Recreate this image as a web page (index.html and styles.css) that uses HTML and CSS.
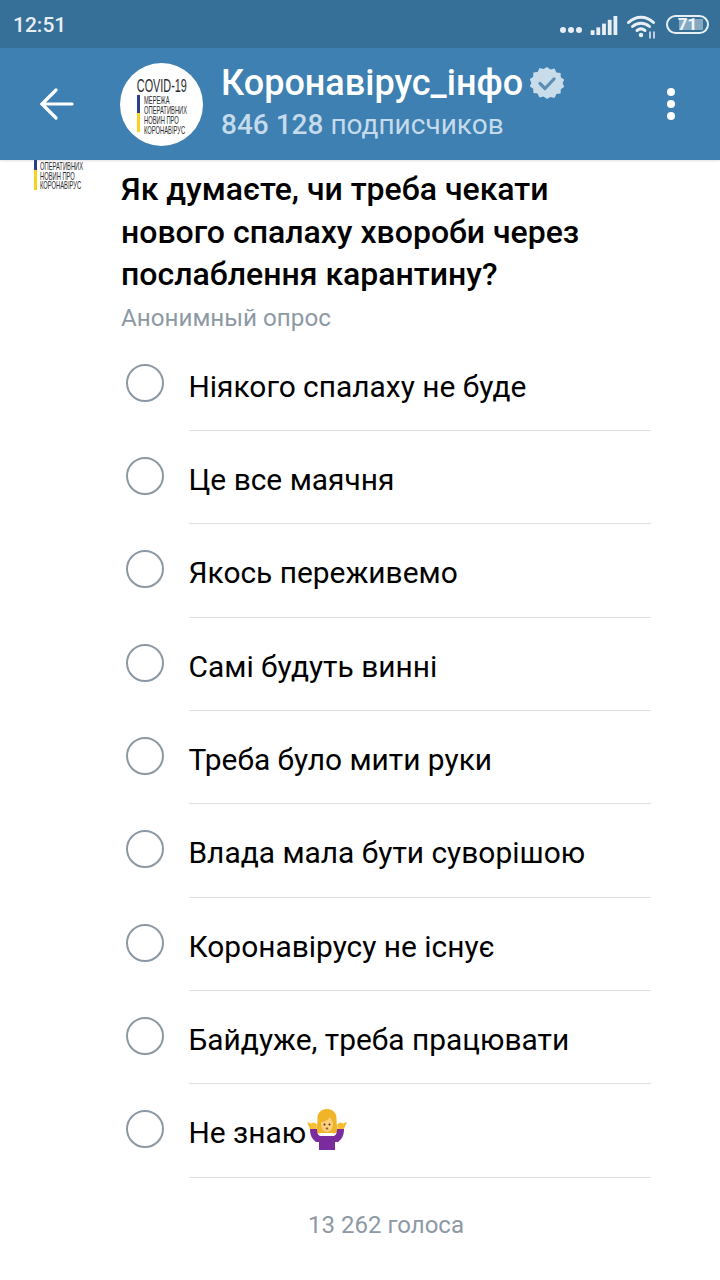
FILE: index.html
```html
<!DOCTYPE html>
<html lang="uk">
<head>
<meta charset="utf-8">
<title>Коронавірус_інфо</title>
<link rel="stylesheet" href="styles.css">
</head>
<body>
<div class="status">
  <span class="time">12:51</span>
  <div class="status-icons">
    <svg class="dots" width="24" height="8" viewBox="0 0 24 8"><circle cx="4" cy="4" r="3" fill="#e8f0f6"/><circle cx="12" cy="4" r="3" fill="#e8f0f6"/><circle cx="20" cy="4" r="3" fill="#e8f0f6"/></svg>
    <svg class="signal" width="28" height="20" viewBox="0 0 28 20" fill="#e8f0f6"><rect x="0" y="15" width="4" height="5"/><rect x="6" y="12" width="4" height="8"/><rect x="12" y="8" width="4" height="12"/><rect x="18" y="4" width="4" height="16"/><rect x="24" y="0" width="4" height="20"/></svg>
    <svg class="wifi" width="30" height="24" viewBox="0 0 30 24" fill="none" stroke="#e8f0f6" stroke-width="3" stroke-linecap="round"><path d="M1.500 7.500C9 .5 19 .5 26.500 7.500"/><path d="M5.500 11.500C10.500 7 17.500 7 22.500 11.500"/><path d="M10 15.500C12.500 13.500 15.500 13.500 18 15.500"/><circle cx="14" cy="20" r="2.200" fill="#e8f0f6" stroke="none"/><path d="M23 23v-6M27 23v-6" stroke-width="1.500"/></svg>
    <div class="battery"><span class="battery-fill"></span><span class="battery-num">71</span></div>
  </div>
</div>
<header class="bar">
  <svg class="back" width="34" height="32" viewBox="0 0 34 32" fill="none" stroke="#fff" stroke-width="3.200" stroke-linecap="round" stroke-linejoin="round"><path d="M2 16h30"/><path d="M16 2 2 16l14 14"/></svg>
  <div class="avatar">
    <div class="covid">COVID-19</div>
    <div class="logo-body">
      <div class="flag"><span class="flag-b"></span><span class="flag-y"></span></div>
      <div class="logo-lines"><span>МЕРЕЖА</span><span>ОПЕРАТИВНИХ</span><span>НОВИН ПРО</span><span>КОРОНАВІРУС</span></div>
    </div>
  </div>
  <div class="titles">
    <div class="title-row">
      <span class="title">Коронавірус_інфо</span>
      <svg class="verified" width="34" height="34" viewBox="0 0 34 34"><path fill="#c9dcea" d="M17 1l3.400 2.600 4.100-1 1.900 3.800 4.200.5.200 4.300 3.500 2.400L32.600 17l1.700 3.900-3.500 2.400-.2 4.300-4.200.5-1.900 3.800-4.100-1L17 33l-3.400-2.600-4.100 1-1.900-3.800-4.200-.5-.2-4.300-3.500-2.400L1.400 17-.3 13.100l3.500-2.400.2-4.300 4.200-.5 1.900-3.800 4.100 1z"/><path d="M10 17.500l5 5 9-9.500" fill="none" stroke="#5b8fb5" stroke-width="3.200" stroke-linecap="round" stroke-linejoin="round"/></svg>
    </div>
    <div class="subs"><b>846 128</b> подписчиков</div>
  </div>
  <div class="menu"><i></i><i></i><i></i></div>
</header>
<main class="content">
  <div class="side-logo">
    <div class="flag-small"><span class="flag-b"></span><span class="flag-y"></span></div>
    <div class="logo-lines small"><span>ОПЕРАТИВНИХ</span><span>НОВИН ПРО</span><span>КОРОНАВІРУС</span></div>
  </div>
  <div class="poll">
    <h1 class="question">Як думаєте, чи треба чекати нового спалаху хвороби через послаблення карантину?</h1>
    <div class="kind">Анонимный опрос</div>
    <ul class="options">
      <li class="option"><span class="radio"></span><span class="label">Ніякого спалаху не буде</span></li>
      <li class="option"><span class="radio"></span><span class="label">Це все маячня</span></li>
      <li class="option"><span class="radio"></span><span class="label">Якось переживемо</span></li>
      <li class="option"><span class="radio"></span><span class="label">Самі будуть винні</span></li>
      <li class="option"><span class="radio"></span><span class="label">Треба було мити руки</span></li>
      <li class="option"><span class="radio"></span><span class="label">Влада мала бути суворішою</span></li>
      <li class="option"><span class="radio"></span><span class="label">Коронавірусу не існує</span></li>
      <li class="option"><span class="radio"></span><span class="label">Байдуже, треба працювати</span></li>
      <li class="option"><span class="radio"></span><span class="label">Не знаю<svg class="shrug" width="42" height="41" viewBox="0 -3 42 41"><path fill="#f0b429" d="M21-3c-6 0-9.500 4-9.500 9 0 6-.5 10-2 13 2 2 4 3 5.500 2h12c1.500 1 3.500 0 5.500-2-1.500-3-2-7-2-13 0-5-3.500-9-9.500-9z"/><path fill="#7a2c9e" d="M4 17h7c0 4 1 6 3 7h14c2-1 3-3 3-7h7c0 6-2 10-6 13h-3v8H13v-8h-3c-4-3-6-7-6-13z"/><ellipse cx="21" cy="12" rx="6" ry="8" fill="#fcd07e"/><path fill="#f0b429" d="M14.500 10c4 0 7.500-1.500 9.500-5 1 2.500 2 4.500 3.500 5l-1-7h-11z"/><circle cx="18.500" cy="12.500" r="1" fill="#4a3020"/><circle cx="23.500" cy="12.500" r="1" fill="#4a3020"/><ellipse cx="21" cy="16.500" rx="1.300" ry="1" fill="#a0522d"/><path fill="#f6bd2e" d="M1 10l4 1.500 3-1 3 2-1 4.500H4zM41 10l-4 1.500-3-1-3 2 1 4.500h6z"/></svg></span></li>
    </ul>
    <div class="votes">13 262 голоса</div>
  </div>
</main>
</body>
</html>
```
FILE: styles.css
```css
* { box-sizing: border-box; }
html, body { margin: 0; padding: 0; }
body {
  width: 720px;
  height: 1280px;
  overflow: hidden;
  background: #fff;
  font-family: Roboto, "Noto Sans", sans-serif;
  color: #000;
}
.status {
  height: 48px;
  background: #366f97;
  display: flex;
  align-items: center;
  justify-content: space-between;
  padding: 0 11px 0 13px;
}
.time { color: #e6eef4; font-size: 21px; font-weight: 500; margin-top: 2px; }
.status-icons { display: flex; align-items: center; }
.dots { margin-top: 12px; margin-right: 7px; }
.signal { margin-top: 3px; margin-right: 9px; height: 19px; }
.wifi { margin-top: 5px; margin-right: 9px; }
.battery {
  position: relative;
  width: 43px;
  height: 19px;
  border: 2px solid #e8f0f6;
  border-radius: 10px;
  display: flex;
  align-items: center;
  justify-content: center;
}
.battery-fill {
  position: absolute;
  left: 11px;
  top: 2px;
  bottom: 2px;
  width: 24px;
  background: #86a9c2;
}
.battery-num { position: relative; color: #f0f5f9; font-size: 17px; font-weight: 700; line-height: 1; }
.bar {
  height: 112px;
  background: #3d80b1;
  display: flex;
  align-items: center;
  padding-left: 40px;
  box-shadow: 0 1px 2px rgba(0,0,0,.12);
  position: relative;
}
.back { flex: none; margin-right: 46px; }
.avatar {
  flex: none;
  width: 83px;
  height: 83px;
  border-radius: 50%;
  background: #fff;
  display: flex;
  flex-direction: column;
  align-items: center;
  padding-top: 14px;
  color: #2a2a2e;
}
.covid {
  font-family: "Liberation Sans", sans-serif;
  font-size: 19px;
  line-height: 17px;
  white-space: nowrap;
  transform: scaleX(.57);
}
.logo-body { display: flex; gap: 4px; width: 50px; margin-top: 1px; }
.flag { width: 3px; height: 37px; display: flex; flex-direction: column; flex: none; }
.flag-b { flex: 1; background: #2c3f8f; }
.flag-y { flex: 1; background: #f7d21f; }
.logo-lines {
  display: flex;
  flex-direction: column;
  font-family: "Liberation Sans", sans-serif;
  font-size: 10.500px;
  line-height: 10px;
  white-space: nowrap;
  transform: scaleX(.55);
  transform-origin: left top;
}
.titles { margin-left: 18px; margin-top: -3px; display: flex; flex-direction: column; }
.title-row { display: flex; align-items: center; height: 42px; margin-bottom: 3px; }
.title { color: #fff; font-size: 36px; font-weight: 500; line-height: 42px; }
.verified { margin-left: 7px; flex: none; }
.subs { color: #c5dbec; font-size: 28px; line-height: 36px; }
.subs b { font-weight: 500; }
.menu {
  position: absolute;
  left: 667px;
  top: 40px;
  display: flex;
  flex-direction: column;
  gap: 4px;
}
.menu i { width: 8px; height: 8px; border-radius: 50%; background: #fff; display: block; }
.content { position: relative; height: 1120px; }
.side-logo {
  position: absolute;
  left: 34px;
  top: 0;
  display: flex;
  gap: 3px;
  color: #2a2a2e;
}
.flag-small { width: 3px; height: 30px; display: flex; flex-direction: column; }
.flag-small .flag-b { flex: 1; }
.flag-small .flag-y { flex: 2; }
.logo-lines.small { padding-top: 2px; line-height: 9.500px; }
.poll { padding-left: 121px; width: 651px; }
.question {
  margin: 0;
  padding-top: 8px;
  font-size: 32px;
  font-weight: 500;
  line-height: 42.600px;
}
.kind { color: #8d99a5; font-size: 24.200px; line-height: 30px; margin-top: 7px; }
.options { list-style: none; margin: 5px 0 0; padding: 0; }
.option {
  height: 93.330px;
  display: flex;
  position: relative;
  padding-left: 67.500px;
}
.radio {
  position: absolute;
  left: 5px;
  top: 26px;
  width: 38px;
  height: 38px;
  border: 2.500px solid #8c98a3;
  border-radius: 50%;
}
.label {
  flex: 1;
  border-bottom: 1px solid #e0e0e0;
  font-size: 29.900px;
  line-height: 36px;
  padding-top: 31px;
  display: flex;
  align-items: flex-start;
}
.shrug { margin-top: -6px; flex: none; }
.votes {
  text-align: center;
  color: #8d99a5;
  font-size: 24px;
  line-height: 30px;
  margin-top: 32px;
}
```
